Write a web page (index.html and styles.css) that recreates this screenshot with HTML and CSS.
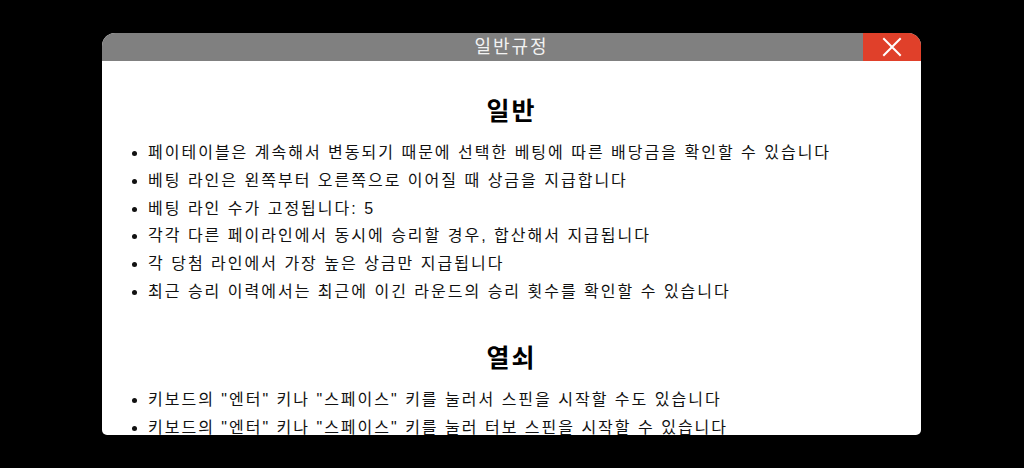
FILE: index.html
```html
<!DOCTYPE html>
<html lang="ko">
<head>
<meta charset="utf-8">
<title>일반규정</title>
<link rel="stylesheet" href="styles.css">
</head>
<body>
<div class="modal">
  <div class="modal-header">
    <div class="modal-title">일반규정</div>
    <button class="close-btn" aria-label="닫기">
      <svg width="20" height="20" viewBox="0 0 20 20"><path d="M2 2 L18 18 M18 2 L2 18" stroke="#fff" stroke-width="2" fill="none" stroke-linecap="square"/></svg>
    </button>
  </div>
  <div class="modal-body">
    <h2 class="section-title">일반</h2>
    <ul class="rules">
      <li>페이테이블은 계속해서 변동되기 때문에 선택한 베팅에 따른 배당금을 확인할 수 있습니다</li>
      <li>베팅 라인은 왼쪽부터 오른쪽으로 이어질 때 상금을 지급합니다</li>
      <li>베팅 라인 수가 고정됩니다: 5</li>
      <li>각각 다른 페이라인에서 동시에 승리할 경우, 합산해서 지급됩니다</li>
      <li>각 당첨 라인에서 가장 높은 상금만 지급됩니다</li>
      <li>최근 승리 이력에서는 최근에 이긴 라운드의 승리 횟수를 확인할 수 있습니다</li>
    </ul>
    <h2 class="section-title section-gap">열쇠</h2>
    <ul class="rules">
      <li>키보드의 "엔터" 키나 "스페이스" 키를 눌러서 스핀을 시작할 수도 있습니다</li>
      <li>키보드의 "엔터" 키나 "스페이스" 키를 눌러 터보 스핀을 시작할 수 있습니다</li>
    </ul>
  </div>
</div>
</body>
</html>
```
FILE: styles.css
```css
html, body {
  margin: 0;
  padding: 0;
  background: #000;
  height: 468px;
  overflow: hidden;
  font-family: "Liberation Sans", "Noto Sans CJK KR", sans-serif;
}
.modal {
  width: 819px;
  height: 402px;
  margin: 33px 0 0 102px;
  background: #fff;
  border-radius: 13px 13px 5px 5px;
  overflow: hidden;
  display: flex;
  flex-direction: column;
}
.modal-header {
  height: 28px;
  background: #808080;
  display: flex;
  align-items: center;
  justify-content: center;
  position: relative;
  flex: none;
}
.modal-title {
  color: #f2f2f2;
  font-size: 18px;
  letter-spacing: 2px;
  line-height: 28px;
}
.close-btn {
  position: absolute;
  right: 0;
  top: 0;
  width: 58px;
  height: 28px;
  border: 0;
  padding: 0;
  background: #e0402a;
  display: flex;
  align-items: center;
  justify-content: center;
}
.modal-body {
  flex: 1;
  overflow: hidden;
  padding-top: 34px;
}
.section-title {
  margin: 0;
  text-align: center;
  font-size: 25px;
  letter-spacing: 2px;
  font-weight: bold;
  line-height: 32px;
  color: #000;
}
.section-gap {
  margin-top: 36px;
}
.rules {
  margin: 12px 0 0 0;
  padding-left: 46px;
  list-style: disc;
  color: #111;
  font-size: 16px;
  letter-spacing: 2px;
  line-height: 27.8px;
}
```
